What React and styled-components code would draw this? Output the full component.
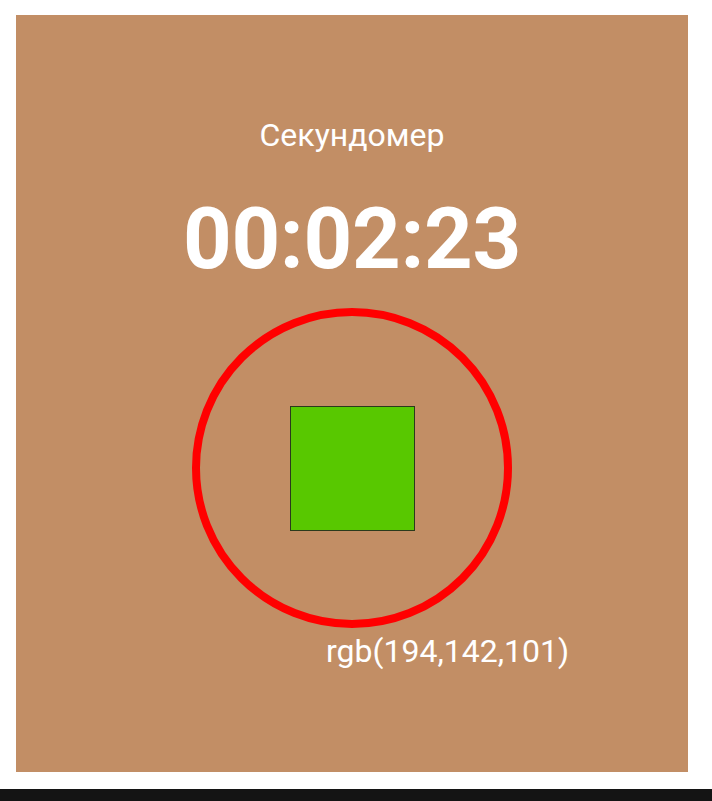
import styled, { createGlobalStyle } from "styled-components"

const GlobalStyle = createGlobalStyle`
    html, body {
        margin: 0;
        padding: 0;
        background: #ffffff;
        font-family: Roboto, "Noto Sans", sans-serif;
    }
`

const Page = styled.div`
    padding: 15px 24px 0 16px;
    display: flex;
    flex-direction: column;
`

const Panel = styled.div`
    height: 757px;
    background-color: rgb(194, 142, 101);
    display: flex;
    flex-direction: column;
    align-items: center;
    padding-top: 102px;
    box-sizing: border-box;
    color: #ffffff;
`

const Title = styled.div`
    font-size: 32px;
    line-height: 37px;
    font-weight: 400;
`

const Time = styled.div`
    margin-top: 34px;
    font-size: 85px;
    line-height: 103px;
    font-weight: 700;
    letter-spacing: -0.3px;
`

const Ring = styled.div`
    margin-top: 17px;
    width: 320px;
    height: 320px;
    box-sizing: border-box;
    border: 8px solid #ff0000;
    border-radius: 50%;
    display: flex;
    align-items: center;
    justify-content: center;
    cursor: pointer;
`

const StopSquare = styled.div`
    width: 125px;
    height: 125px;
    box-sizing: border-box;
    background-color: #58c800;
    border: 1px solid #2b3a1c;
`

const ColorLabel = styled.div`
    margin-top: 5px;
    align-self: flex-start;
    margin-left: 310px;
    font-size: 32px;
    line-height: 37px;
`

const Footer = styled.div`
    margin: 17px -24px 0 -16px;
    height: 12px;
    background-color: #141414;
`

const App = () => {
    return (
        <>
            <GlobalStyle />
            <Page>
                <Panel>
                    <Title>Секундомер</Title>
                    <Time>00:02:23</Time>
                    <Ring>
                        <StopSquare />
                    </Ring>
                    <ColorLabel>rgb(194,142,101)</ColorLabel>
                </Panel>
                <Footer />
            </Page>
        </>
    )
}

export default App
